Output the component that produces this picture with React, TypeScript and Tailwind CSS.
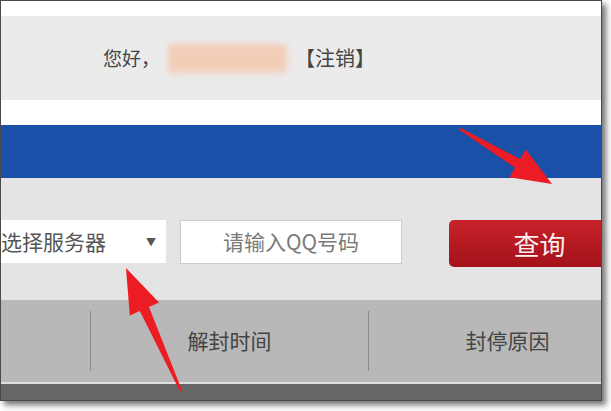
import React from "react";

const font = { fontFamily: '"Noto Sans CJK SC", "Noto Sans", sans-serif' };

function Arrows() {
  return (
    <svg
      className="absolute left-0 top-0 pointer-events-none"
      width={611}
      height={411}
      viewBox="0 0 611 411"
    >
      <polygon
        fill="#ec1c24"
        points="460.5,128.1 520.2,159.1 525.8,149.6 552,184 509.4,177.2 515,167.7 459.5,129.9"
      />
      <polygon
        fill="#ec1c24"
        points="182,390.6 149,307 159,302.5 126,268 129.8,315.5 139.8,311 180,391.4"
      />
    </svg>
  );
}

export default function App() {
  return (
    <div className="relative w-[611px] h-[411px] bg-white overflow-hidden" style={font}>
      <div className="w-[602px] h-[401px] border border-[#4a4a4a] shadow-[4px_4px_6px_rgba(0,0,0,0.55)] overflow-hidden flex flex-col bg-white">
        {/* top white strip */}
        <div className="h-[15px] bg-white shrink-0" />
        {/* greeting bar */}
        <div className="h-[84px] bg-[#ebebeb] shrink-0 flex items-center pl-[102px] text-[19px] text-[#444]">
          <span className="shrink-0">您好，</span>
          <span className="shrink-0 ml-[8px] w-[119px] h-[29px] bg-[#f2cdb8] blur-[3px] rounded-sm" />
          <span className="shrink-0 ml-[8px] text-[20px]">【注销】</span>
        </div>
        <div className="h-[25px] bg-white shrink-0" />
        {/* blue nav */}
        <div className="h-[53px] bg-[#1b50a9] shrink-0" />
        {/* search area */}
        <div className="h-[122px] bg-[#e4e4e4] shrink-0 pt-[42px] flex items-start">
          <div className="shrink-0 w-[165px] h-[43px] bg-white flex items-center justify-between pr-[10px] text-[21px] text-[#555]">
            <span>选择服务器</span>
            <span className="text-[10px] text-[#555]">▼</span>
          </div>
          <div className="shrink-0 ml-[14px] w-[222px] h-[44px] bg-white border border-[#cccccc] flex items-center justify-center text-[21px] text-[#7a7a7a]">
            请输入QQ号码
          </div>
          <div className="shrink-0 ml-[47px] w-[181px] h-[47px] rounded-l-[5px] bg-gradient-to-b from-[#c8222a] to-[#a3121a] flex items-center justify-center text-[26px] text-[#fdf0f0]">
            查询
          </div>
        </div>
        {/* table header */}
        <div className="h-[82px] bg-[#b8b8b8] shrink-0 flex items-center text-[21px] text-[#444]">
          <div className="shrink-0 w-[89px]" />
          <div className="shrink-0 w-px h-[60px] bg-[#8a8a8a]" />
          <div className="shrink-0 w-[277px] text-center">解封时间</div>
          <div className="shrink-0 w-px h-[60px] bg-[#8a8a8a]" />
          <div className="shrink-0 w-[277px] text-center">封停原因</div>
        </div>
        <div className="h-[2px] bg-[#dedede] shrink-0" />
        <div className="flex-1 bg-[#666666]" />
      </div>
      <Arrows />
    </div>
  );
}
